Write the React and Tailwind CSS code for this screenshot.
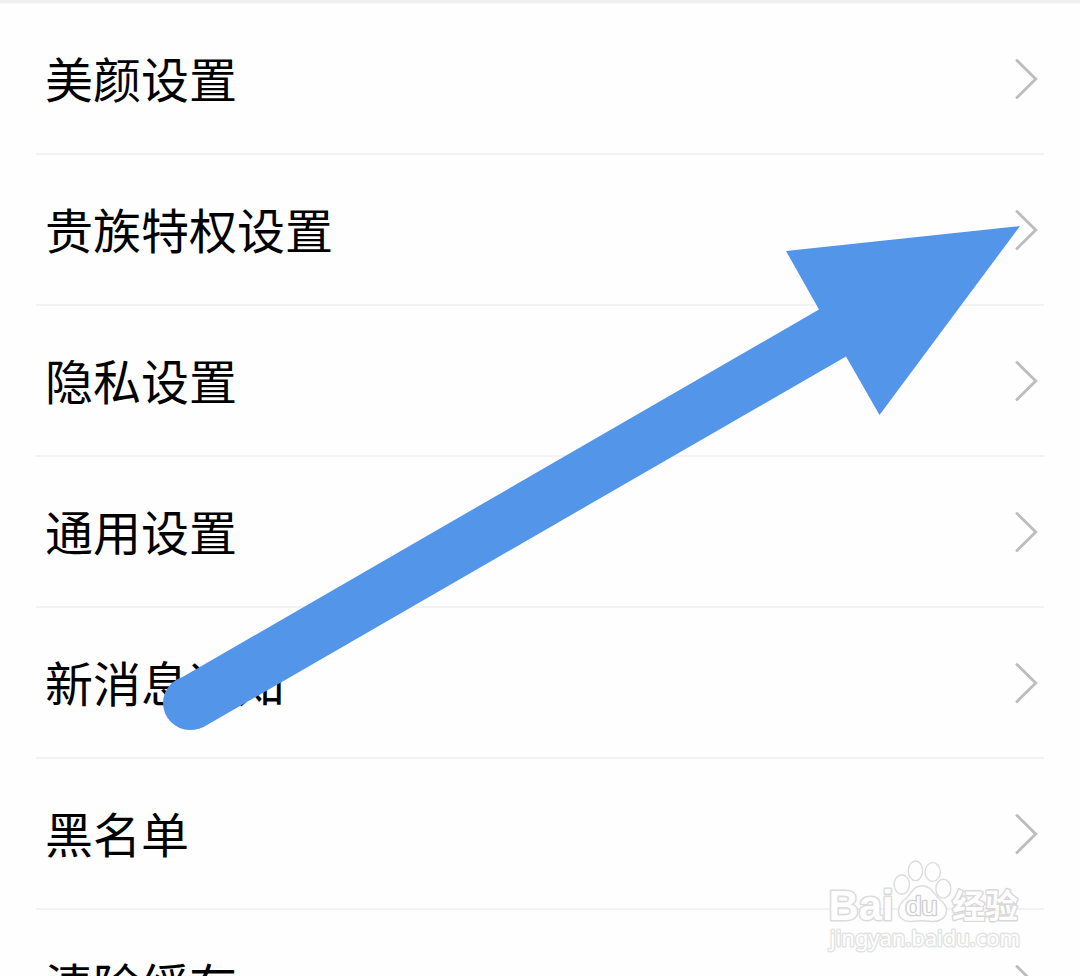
const settings = [
    { id: 'beauty', label: '美颜设置' },
    { id: 'noble', label: '贵族特权设置' },
    { id: 'privacy', label: '隐私设置' },
    { id: 'general', label: '通用设置' },
    { id: 'notification', label: '新消息通知' },
    { id: 'blacklist', label: '黑名单' },
    { id: 'cache', label: '清除缓存' }
];

function Chevron() {
    return (
        <svg width="26" height="44" viewBox="0 0 26 44" fill="none" className="shrink-0">
            <path d="M3 3.5 L21.7 22 L3 40.5" stroke="#bdbdbd" strokeWidth="2.9" strokeLinecap="round" />
        </svg>
    );
}

function SettingRow({ label }) {
    return (
        <li className="flex h-[151px] items-center justify-between border-b-2 border-[#f2f2f2] pr-1 pl-[9px]">
            <span className="pb-[3px] text-[48px] leading-[72px] text-black">{label}</span>
            <Chevron />
        </li>
    );
}

function Arrow() {
    return (
        <svg
            width="1080"
            height="976"
            viewBox="0 0 1080 976"
            className="pointer-events-none absolute top-0 left-0"
        >
            <path
                d="M1020 226 L786 251 L819 309.5 L176.5 680.5 A27 27 0 0 0 203.5 727 L846 356.5 L879.5 415 Z"
                fill="#5395e9"
            />
            <circle cx="190" cy="703" r="27" fill="#5395e9" />
        </svg>
    );
}

function Watermark() {
    return (
        <svg
            width="210"
            height="106"
            viewBox="820 856 210 106"
            className="pointer-events-none absolute top-[856px] left-[820px]"
            fill="#fefefe"
            stroke="#dcdcdc"
            strokeWidth="1.4"
            strokeLinejoin="round"
        >
            <text
                x="828.5"
                y="919.5"
                fontSize="43"
                textLength="65"
                lengthAdjust="spacingAndGlyphs"
                fontFamily="'Liberation Sans', Arial, sans-serif"
                fontWeight="700"
                paintOrder="stroke"
                strokeWidth="3.2"
            >
                Bai
            </text>
            <ellipse cx="901.8" cy="884.5" rx="7.7" ry="9.7" />
            <ellipse cx="915.5" cy="870.8" rx="7.2" ry="9.8" />
            <ellipse cx="932.7" cy="872" rx="7.6" ry="9.4" />
            <ellipse cx="943.3" cy="888.7" rx="7.5" ry="9.4" />
            <path d="M922 885.7 C914 886 912 892 908 896.5 C903 901 898.5 904 898.5 911 C898.5 918 904 922 911 921.5 C918 920.5 925 920.5 932 921.5 C940 922 946.5 918 946.5 910 C946.5 904 941 901 937 896.5 C933 892 930 886 922 885.7 Z" />
            <text
                x="905.5"
                y="915"
                fontSize="25"
                textLength="32"
                lengthAdjust="spacingAndGlyphs"
                fontFamily="'Liberation Sans', Arial, sans-serif"
                paintOrder="stroke"
                stroke="#d0d0d0"
                strokeWidth="2.6"
            >
                du
            </text>
            <text
                x="952"
                y="918"
                fontSize="33"
                textLength="66"
                lengthAdjust="spacingAndGlyphs"
                fontFamily="'Noto Sans CJK SC', sans-serif"
                fontWeight="700"
                paintOrder="stroke"
                stroke="#d8d8d8"
                strokeWidth="2.8"
            >
                经验
            </text>
            <text
                x="830"
                y="946"
                fontSize="21.5"
                textLength="190"
                lengthAdjust="spacingAndGlyphs"
                fontFamily="'Noto Sans', 'Open Sans', sans-serif"
                paintOrder="stroke"
                stroke="#e3e3e3"
                strokeWidth="2.8"
            >
                jingyan.baidu.com
            </text>
        </svg>
    );
}

export default function App() {
    return (
        <div className="relative h-[976px] w-[1080px] overflow-hidden bg-[#fefefe] font-['Noto_Sans_CJK_SC',sans-serif]">
            <div className="h-1 border-b border-[#f8f8f8] bg-[#f0f0f0]" />
            <ul className="px-9">
                {settings.map((item) => (
                    <SettingRow key={item.id} label={item.label} />
                ))}
            </ul>
            <Arrow />
            <Watermark />
        </div>
    );
}
